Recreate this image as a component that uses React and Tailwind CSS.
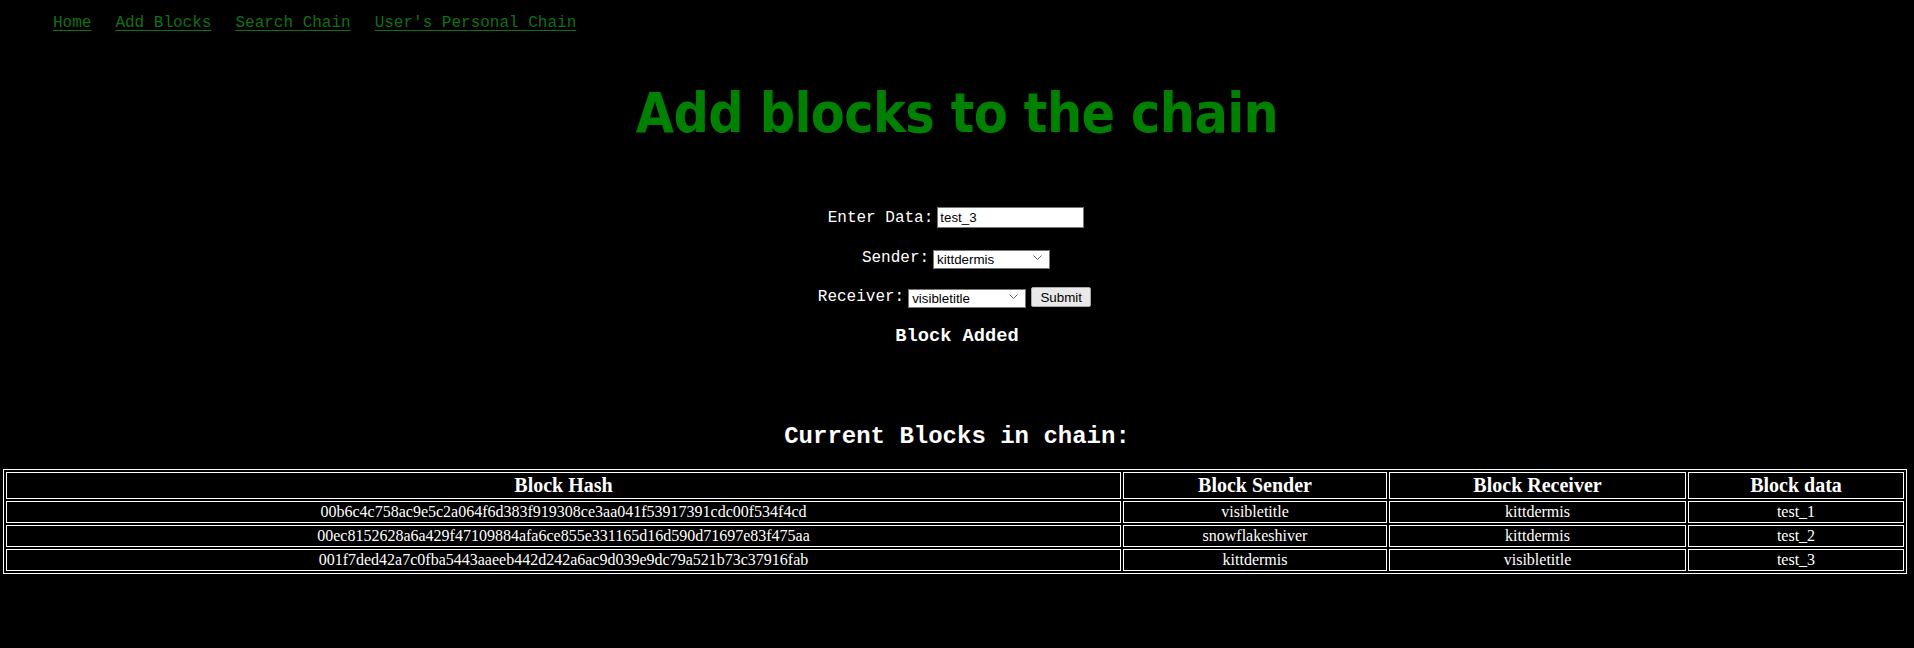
import React from 'react'

const links = ['Home', 'Add Blocks', 'Search Chain', "User's Personal Chain"]

const blocks = [
    { hash: '00b6c4c758ac9e5c2a064f6d383f919308ce3aa041f53917391cdc00f534f4cd', sender: 'visibletitle', receiver: 'kittdermis', data: 'test_1' },
    { hash: '00ec8152628a6a429f47109884afa6ce855e331165d16d590d71697e83f475aa', sender: 'snowflakeshiver', receiver: 'kittdermis', data: 'test_2' },
    { hash: '001f7ded42a7c0fba5443aaeeb442d242a6ac9d039e9dc79a521b73c37916fab', sender: 'kittdermis', receiver: 'visibletitle', data: 'test_3' },
]

const mono = "font-['Liberation_Mono','Courier_New',monospace]"
const arial = "font-['Liberation_Sans',Arial,sans-serif] text-[13.33px] text-black"

const Select = ({ value, width }) => (
    <div className={`relative h-[19px] ${width}`}>
        <select
            defaultValue={value}
            className={`${arial} appearance-none w-full h-full bg-white border border-[#767676] pl-[3px] pr-5 leading-[17px]`}
        >
            <option>{value}</option>
        </select>
        <svg className="absolute right-[8px] top-[7px] pointer-events-none" width="9" height="5" viewBox="0 0 9 5" fill="none">
            <path d="M0.5 0.5 L4.5 4.5 L8.5 0.5" stroke="#5f5f5f" strokeWidth="1" />
        </svg>
    </div>
)

const App = () => {
    return (
        <div className="min-h-[648px] bg-black text-white">
            {/* nav */}
            <nav className={`${mono} flex gap-[24px] pl-[53px] pt-[14px] text-[16px] leading-[18px]`}>
                {links.map(l => (
                    <a key={l} href="#" className="text-[#11701a] underline underline-offset-[3px]">{l}</a>
                ))}
            </nav>

            <h1 className="mt-[49px] text-center font-['DejaVu_Sans_Condensed','DejaVu_Sans',Tahoma,sans-serif] font-bold text-[55px] leading-[64px] tracking-[-0.6px] text-[#008000]">
                Add blocks to the chain
            </h1>

            {/* form */}
            <div className={`${mono} flex flex-col items-center mt-[62px] text-[16px]`}>
                <div className="flex items-center gap-[4px] h-[21px] pr-[2px]">
                    <label>Enter Data:</label>
                    <input
                        defaultValue="test_3"
                        className={`${arial} w-[147px] h-[21px] bg-white border border-[#767676] px-[2px]`}
                    />
                </div>
                <div className="flex items-center gap-[4px] h-[21px] mt-[19px] pr-[2px]">
                    <label>Sender:</label>
                    <Select value="kittdermis" width="w-[117px]" />
                </div>
                <div className="flex items-center gap-[4px] h-[21px] mt-[18px] pr-[5px]">
                    <label>Receiver:</label>
                    <Select value="visibletitle" width="w-[118px]" />
                    <button className={`${arial} w-[60px] h-[20px] ml-[1px] bg-[#e9e9e9] border border-[#a9a9a9] rounded-[2px]`}>Submit</button>
                </div>
                <h3 className="mt-[19px] font-bold text-[18.72px] leading-[21px]">Block Added</h3>
                <h2 className="mt-[76px] font-bold text-[24px] leading-[27px]">Current Blocks in chain:</h2>
            </div>

            <table className="mt-[19px] ml-[3px] w-[1904px] table-fixed border-separate border-spacing-[2px] border border-white font-['Liberation_Serif','Times_New_Roman',serif] text-center">
                <thead>
                    <tr>
                        <th className="w-[1115px] border border-white p-px text-[20px] leading-[23px] font-bold">Block Hash</th>
                        <th className="w-[264px] border border-white p-px text-[20px] leading-[23px] font-bold">Block Sender</th>
                        <th className="w-[297px] border border-white p-px text-[20px] leading-[23px] font-bold">Block Receiver</th>
                        <th className="border border-white p-px text-[20px] leading-[23px] font-bold">Block data</th>
                    </tr>
                </thead>
                <tbody>
                    {blocks.map(b => (
                        <tr key={b.hash}>
                            <td className="border border-white p-px text-[16px] leading-[18px]">{b.hash}</td>
                            <td className="border border-white p-px text-[16px] leading-[18px]">{b.sender}</td>
                            <td className="border border-white p-px text-[16px] leading-[18px]">{b.receiver}</td>
                            <td className="border border-white p-px text-[16px] leading-[18px]">{b.data}</td>
                        </tr>
                    ))}
                </tbody>
            </table>
        </div>
    )
}

export default App
